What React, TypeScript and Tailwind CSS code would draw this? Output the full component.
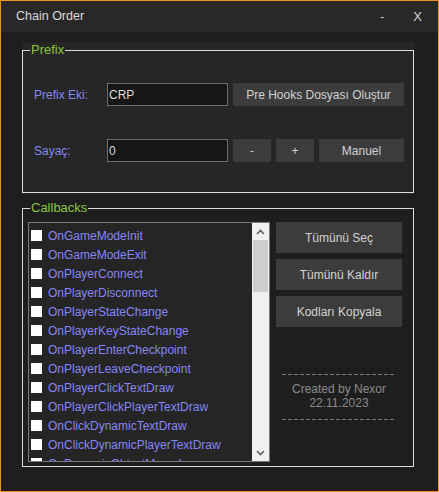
import React, { useState } from 'react';

const callbacks = [
  'OnGameModeInit',
  'OnGameModeExit',
  'OnPlayerConnect',
  'OnPlayerDisconnect',
  'OnPlayerStateChange',
  'OnPlayerKeyStateChange',
  'OnPlayerEnterCheckpoint',
  'OnPlayerLeaveCheckpoint',
  'OnPlayerClickTextDraw',
  'OnPlayerClickPlayerTextDraw',
  'OnClickDynamicTextDraw',
  'OnClickDynamicPlayerTextDraw',
  'OnDynamicObjectMoved',
];

function GrayButton({ label, className }: { label: string; className: string }) {
  return (
    <button className={`bg-[#3c3c3c] text-[#d2d2d2] flex items-center justify-center ${className}`}>
      {label}
    </button>
  );
}

export default function App() {
  const [prefix, setPrefix] = useState('CRP');
  const [counter, setCounter] = useState('0');
  const [checked, setChecked] = useState<Record<string, boolean>>({});

  return (
    <div
      className="w-[439px] h-[492px] border border-[#f0901c] bg-[#1e1e1e] flex flex-col text-[12px] overflow-hidden"
      style={{ fontFamily: '"Liberation Sans", Arial, sans-serif' }}
    >
      {/* title bar */}
      <div className="h-[31px] bg-[#282828] flex items-center shrink-0">
        <span className="ml-[15px] text-[12.5px] text-[#dadada]">Chain Order</span>
        <span className="ml-auto text-[#d4d4d4] text-[12px]">-</span>
        <span className="ml-[29px] mr-[16px] text-[#d4d4d4] text-[13px]">X</span>
      </div>

      <div className="pl-[21px] pt-[10px]">
        {/* Prefix */}
        <div className="relative w-[392px] h-[152px] pt-[8px] bg-[#262626]">
          <div className="h-[143px] border border-[#dcdcdc]">
            <div className="pt-[32px] pl-[11px] flex items-center">
              <span className="w-[73px] text-[#8585f6]">Prefix Eki:</span>
              <input
                value={prefix}
                onChange={(e) => setPrefix(e.target.value)}
                className="w-[121px] h-[23px] bg-[#161616] border border-[#6e6e6e] text-[#dadada] px-[1px] outline-none"
              />
              <GrayButton label="Pre Hooks Dosyası Oluştur" className="ml-[5px] w-[171px] h-[23px]" />
            </div>
            <div className="mt-[33px] pl-[11px] flex items-center">
              <span className="w-[73px] text-[#8585f6]">Sayaç:</span>
              <input
                value={counter}
                onChange={(e) => setCounter(e.target.value)}
                className="w-[121px] h-[23px] bg-[#161616] border border-[#6e6e6e] text-[#dadada] px-[1px] outline-none"
              />
              <GrayButton label="-" className="ml-[5px] w-[38px] h-[23px]" />
              <GrayButton label="+" className="ml-[5px] w-[38px] h-[23px]" />
              <GrayButton label="Manuel" className="ml-[5px] w-[85px] h-[23px]" />
            </div>
          </div>
          <span className="absolute top-0 left-[8px] px-[1px] bg-[#262626] text-[13px] leading-[16px] text-[#8cc63f]">
            Prefix
          </span>
        </div>

        {/* Callbacks */}
        <div className="relative w-[392px] mt-[6px] pt-[8px]">
          <div className="h-[259px] border border-[#dcdcdc] flex pt-[13px] pl-[5px]">
            <div className="w-[242px] h-[240px] border border-[#7a7a7a] bg-[#252525] flex overflow-hidden">
              <div className="flex-1 pt-[3px] overflow-hidden">
                {callbacks.map((name) => (
                  <label key={name} className="h-[19px] flex items-center pl-[2px] cursor-pointer">
                    <input
                      type="checkbox"
                      checked={!!checked[name]}
                      onChange={() => setChecked({ ...checked, [name]: !checked[name] })}
                      className="appearance-none w-[11px] h-[11px] bg-white shrink-0"
                    />
                    <span className="ml-[6px] text-[#8585f6] whitespace-nowrap">{name}</span>
                  </label>
                ))}
              </div>
              <div className="w-[17px] bg-[#f0f0f0] flex flex-col shrink-0">
                <div className="h-[17px] flex items-center justify-center">
                  <svg width="9" height="6" viewBox="0 0 9 6">
                    <path d="M1 5 L4.5 1.5 L8 5" stroke="#606060" strokeWidth="1.6" fill="none" />
                  </svg>
                </div>
                <div className="mx-[1px] h-[52px] bg-[#cdcdcd]" />
                <div className="flex-1" />
                <div className="h-[17px] flex items-center justify-center">
                  <svg width="9" height="6" viewBox="0 0 9 6">
                    <path d="M1 1 L4.5 4.5 L8 1" stroke="#606060" strokeWidth="1.6" fill="none" />
                  </svg>
                </div>
              </div>
            </div>

            <div className="ml-[6px] w-[126px] flex flex-col gap-[6px]">
              <GrayButton label="Tümünü Seç" className="h-[31px]" />
              <GrayButton label="Tümünü Kaldır" className="h-[31px]" />
              <GrayButton label="Kodları Kopyala" className="h-[31px]" />
              <div className="mt-[41px] flex flex-col items-center">
                <div className="w-[114px] h-[1px] bg-[repeating-linear-gradient(to_right,#7c7c7c_0_4px,transparent_4px_6px)]" />
                <div className="mt-[7px] text-[#8a8a8a] leading-[14px] text-center">
                  <div>Created by Nexor</div>
                  <div>22.11.2023</div>
                </div>
                <div className="mt-[9px] w-[114px] h-[1px] bg-[repeating-linear-gradient(to_right,#7c7c7c_0_4px,transparent_4px_6px)]" />
              </div>
            </div>
          </div>
          <span className="absolute top-0 left-[8px] px-[1px] bg-[#1e1e1e] text-[13px] leading-[16px] text-[#8cc63f]">
            Callbacks
          </span>
        </div>
      </div>
    </div>
  );
}
